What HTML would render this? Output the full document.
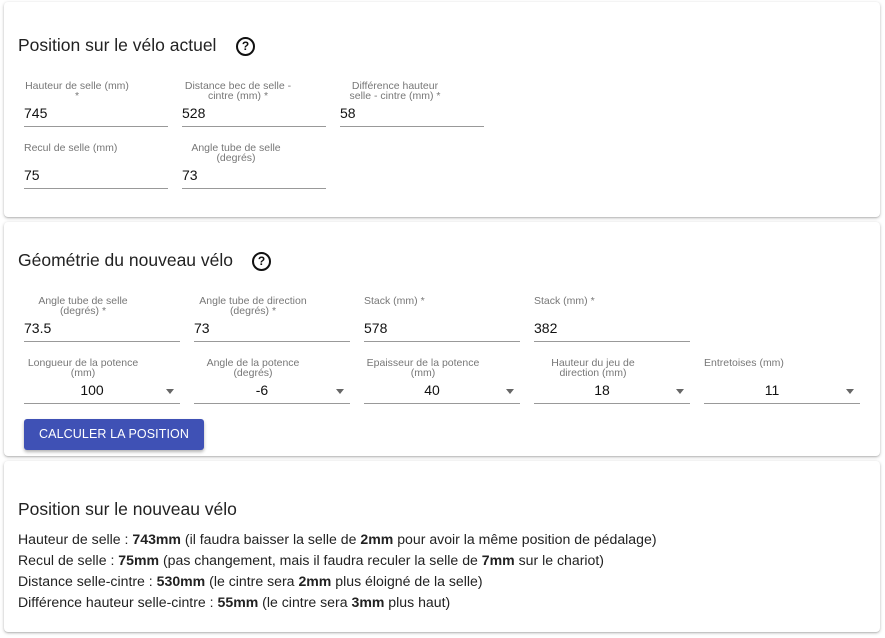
<!DOCTYPE html>
<html><head><meta charset="utf-8"><style>
body{margin:0;width:885px;height:638px;background:#fff;font-family:"Liberation Sans",Arial,sans-serif;position:relative;overflow:hidden}
.card{position:absolute;left:4px;width:876px;background:#fff;border-radius:4px;box-shadow:0 1px 3px rgba(0,0,0,.25),0 1px 1px rgba(0,0,0,.1)}
.t{position:absolute;font-size:17.5px;color:#222}
.q{position:absolute;width:15px;height:15px;border:2px solid #111;border-radius:50%;font-size:12px;font-weight:bold;text-align:center;line-height:15px;color:#111}
.f{position:absolute;border-bottom:1px solid #999;height:0}
.l{position:absolute;font-size:10.5px;color:#777;line-height:10px;text-align:center}
.v{position:absolute;font-size:14px;color:#111}
.ar{position:absolute;width:0;height:0;border-left:4px solid transparent;border-right:4px solid transparent;border-top:5px solid #666}
.p{position:absolute;left:14px;font-size:14.1px;color:#222}
</style></head><body>
<div class="card" style="top:2px;height:215px"></div>
<div class="card" style="top:222px;height:234px"></div>
<div class="card" style="top:461px;height:171px"></div>

<div class="t" style="left:18px;top:35px">Position sur le vélo actuel</div>
<div class="q" style="left:236px;top:37px">?</div>

<div class="l" style="left:24px;top:81px;width:106px">Hauteur de selle (mm)<br>*</div>
<div class="v" style="left:24px;top:105px">745</div><div class="f" style="left:24px;top:126px;width:144px"></div>
<div class="l" style="left:182px;top:81px;width:112px">Distance bec de selle -<br>cintre (mm) *</div>
<div class="v" style="left:182px;top:105px">528</div><div class="f" style="left:182px;top:126px;width:144px"></div>
<div class="l" style="left:340px;top:81px;width:110px">Différence hauteur<br>selle - cintre (mm) *</div>
<div class="v" style="left:340px;top:105px">58</div><div class="f" style="left:340px;top:126px;width:144px"></div>

<div class="l" style="left:24px;top:143px;width:94px;text-align:left">Recul de selle (mm)</div>
<div class="v" style="left:24px;top:167px">75</div><div class="f" style="left:24px;top:188px;width:144px"></div>
<div class="l" style="left:182px;top:143px;width:108px">Angle tube de selle<br>(degrés)</div>
<div class="v" style="left:182px;top:167px">73</div><div class="f" style="left:182px;top:188px;width:144px"></div>

<div class="t" style="left:18px;top:250px">Géométrie du nouveau vélo</div>
<div class="q" style="left:252px;top:252px">?</div>

<div class="l" style="left:24px;top:296px;width:118px">Angle tube de selle<br>(degrés) *</div>
<div class="v" style="left:24px;top:320px">73.5</div><div class="f" style="left:24px;top:341px;width:156px"></div>
<div class="l" style="left:194px;top:296px;width:118px">Angle tube de direction<br>(degrés) *</div>
<div class="v" style="left:194px;top:320px">73</div><div class="f" style="left:194px;top:341px;width:156px"></div>
<div class="l" style="left:364px;top:296px;text-align:left">Stack (mm) *</div>
<div class="v" style="left:364px;top:320px">578</div><div class="f" style="left:364px;top:341px;width:156px"></div>
<div class="l" style="left:534px;top:296px;text-align:left">Stack (mm) *</div>
<div class="v" style="left:534px;top:320px">382</div><div class="f" style="left:534px;top:341px;width:156px"></div>

<div class="l" style="left:24px;top:358px;width:118px">Longueur de la potence<br>(mm)</div>
<div class="v" style="left:24px;top:382px;width:136px;text-align:center">100</div><div class="ar" style="left:166px;top:389px"></div><div class="f" style="left:24px;top:403px;width:156px"></div>
<div class="l" style="left:194px;top:358px;width:118px">Angle de la potence<br>(degrés)</div>
<div class="v" style="left:194px;top:382px;width:136px;text-align:center">-6</div><div class="ar" style="left:336px;top:389px"></div><div class="f" style="left:194px;top:403px;width:156px"></div>
<div class="l" style="left:364px;top:358px;width:118px">Epaisseur de la potence<br>(mm)</div>
<div class="v" style="left:364px;top:382px;width:136px;text-align:center">40</div><div class="ar" style="left:506px;top:389px"></div><div class="f" style="left:364px;top:403px;width:156px"></div>
<div class="l" style="left:534px;top:358px;width:118px">Hauteur du jeu de<br>direction (mm)</div>
<div class="v" style="left:534px;top:382px;width:136px;text-align:center">18</div><div class="ar" style="left:676px;top:389px"></div><div class="f" style="left:534px;top:403px;width:156px"></div>
<div class="l" style="left:704px;top:358px;text-align:left">Entretoises (mm)</div>
<div class="v" style="left:704px;top:382px;width:136px;text-align:center">11</div><div class="ar" style="left:846px;top:389px"></div><div class="f" style="left:704px;top:403px;width:156px"></div>

<div style="position:absolute;left:24px;top:419px;width:180px;height:31px;background:#3f51b5;border-radius:3px;box-shadow:0 2px 3px rgba(0,0,0,.3);color:#fff;font-size:12.5px;line-height:31px;text-align:center;letter-spacing:.1px">CALCULER LA POSITION</div>

<div class="t" style="left:18px;top:499px">Position sur le nouveau vélo</div>
<div class="p" style="left:18px;top:531px">Hauteur de selle : <b>743mm</b> (il faudra baisser la selle de <b>2mm</b> pour avoir la même position de pédalage)</div>
<div class="p" style="left:18px;top:552px">Recul de selle : <b>75mm</b> (pas changement, mais il faudra reculer la selle de <b>7mm</b> sur le chariot)</div>
<div class="p" style="left:18px;top:573px">Distance selle-cintre : <b>530mm</b> (le cintre sera <b>2mm</b> plus éloigné de la selle)</div>
<div class="p" style="left:18px;top:594px">Différence hauteur selle-cintre : <b>55mm</b> (le cintre sera <b>3mm</b> plus haut)</div>
</body></html>
